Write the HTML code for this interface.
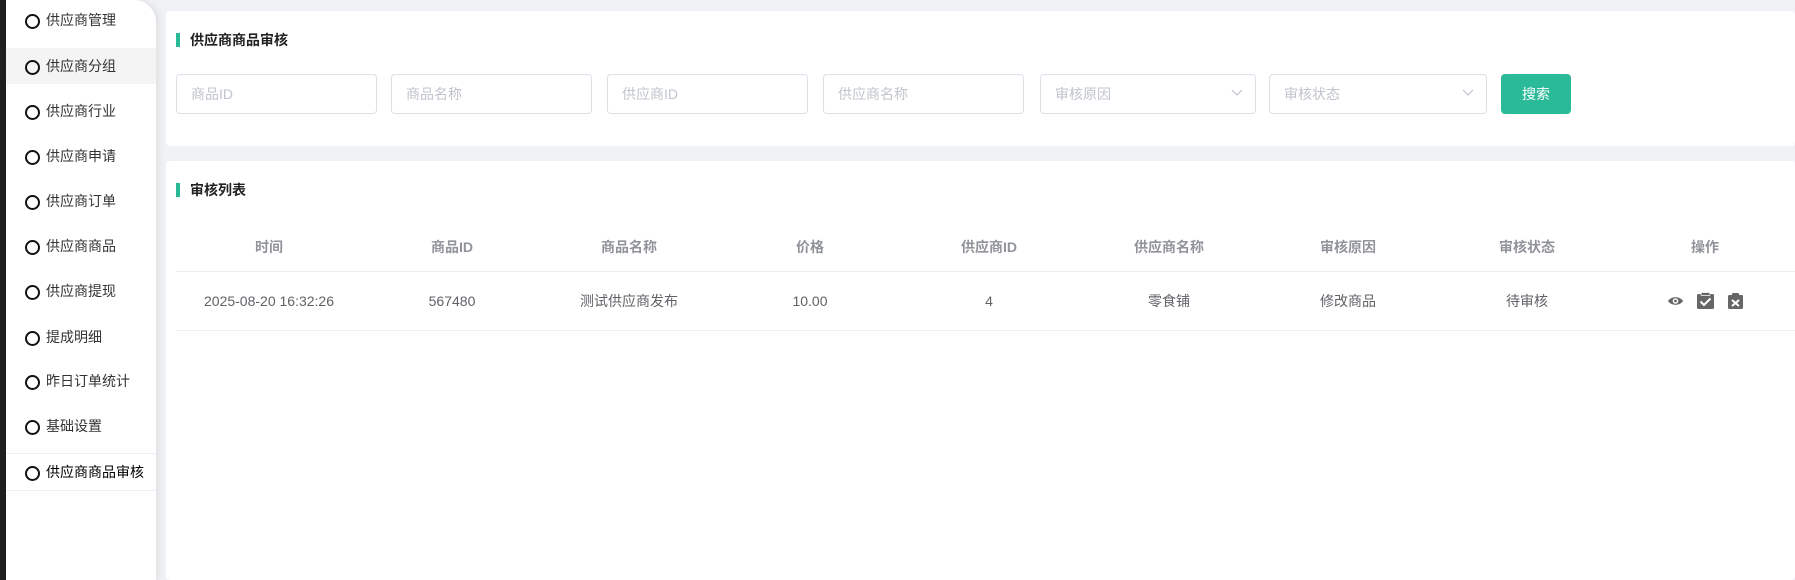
<!DOCTYPE html>
<html><head><meta charset="utf-8"><style>
*{margin:0;padding:0;box-sizing:border-box}
body{width:1795px;height:580px;overflow:hidden;background:#f0f2f5;font-family:"Liberation Sans","Noto Sans CJK SC",sans-serif;position:relative}
.dark{position:absolute;left:0;top:0;width:6px;height:580px;background:#1f1f1f}
.side{position:absolute;left:6px;top:0;width:150px;height:580px;background:#fff;border-top-right-radius:22px;box-shadow:3px 0 8px rgba(0,0,0,0.08)}
.it{position:absolute;left:0;width:150px;height:36px;line-height:36px;font-size:14px;color:#333;padding-left:40px}
.it:before{content:"";position:absolute;left:19px;top:12px;width:11px;height:11px;border:2px solid #111;border-radius:50%}
.card{position:absolute;left:166px;right:0;background:#fff;border-radius:4px}
.tt{position:absolute;left:10px;font-size:14px;font-weight:bold;color:#222;padding-left:14px;line-height:16px}
.tt:before{content:"";position:absolute;left:0;top:1px;width:4px;height:14px;background:#2bba98}
.in{position:absolute;top:74px;height:40px;border:1px solid #dcdfe6;border-radius:4px;font-size:14px;color:#c0c4cc;line-height:38px;padding-left:14px;background:#fff}
.in svg{position:absolute;right:12px;top:14px}
.btn{position:absolute;left:1501px;top:74px;width:70px;height:40px;background:#2bba98;color:#fff;border-radius:4px;font-size:14px;text-align:center;line-height:40px}
.c{position:absolute;width:170px;margin-left:-85px;text-align:center;font-size:14px;height:20px;line-height:20px;overflow:hidden}
.h{top:237px;font-weight:bold;color:#909399}
.d{top:291px;color:#606266}
.ln{position:absolute;left:176px;right:0;height:1px;background:#ebeef5}
</style></head><body>
<div class="dark"></div>
<div class="side">
<div class="it" style="top:2px">供应商管理</div>
<div class="it" style="top:48px;background:#f4f4f4">供应商分组</div>
<div class="it" style="top:93px">供应商行业</div>
<div class="it" style="top:138px">供应商申请</div>
<div class="it" style="top:183px">供应商订单</div>
<div class="it" style="top:228px">供应商商品</div>
<div class="it" style="top:273px">供应商提现</div>
<div class="it" style="top:319px">提成明细</div>
<div class="it" style="top:363px">昨日订单统计</div>
<div class="it" style="top:408px">基础设置</div>
<div style="position:absolute;left:0;top:453px;width:150px;height:1px;background:#ebeef5"></div>
<div class="it" style="top:454px;color:#000">供应商商品审核</div>
<div style="position:absolute;left:0;top:490px;width:150px;height:1px;background:#ebeef5"></div>
</div>
<div class="card" style="top:11px;height:135px"><div class="tt" style="top:21px">供应商商品审核</div></div>
<div class="card" style="top:161px;height:419px"><div class="tt" style="top:21px">审核列表</div></div>
<div class="in" style="left:176px;width:201px">商品ID</div>
<div class="in" style="left:391px;width:201px">商品名称</div>
<div class="in" style="left:607px;width:201px">供应商ID</div>
<div class="in" style="left:823px;width:201px">供应商名称</div>
<div class="in" style="left:1040px;width:216px">审核原因<svg width="12" height="8" viewBox="0 0 12 8"><path d="M1 1l5 5 5-5" fill="none" stroke="#c0c4cc" stroke-width="1.2"/></svg></div>
<div class="in" style="left:1269px;width:218px">审核状态<svg width="12" height="8" viewBox="0 0 12 8"><path d="M1 1l5 5 5-5" fill="none" stroke="#c0c4cc" stroke-width="1.2"/></svg></div>
<div class="btn">搜索</div>
<div class="c h" style="left:269px">时间</div>
<div class="c h" style="left:452px">商品ID</div>
<div class="c h" style="left:629px">商品名称</div>
<div class="c h" style="left:810px">价格</div>
<div class="c h" style="left:989px">供应商ID</div>
<div class="c h" style="left:1169px">供应商名称</div>
<div class="c h" style="left:1348px">审核原因</div>
<div class="c h" style="left:1527px">审核状态</div>
<div class="c h" style="left:1705px">操作</div>
<div class="ln" style="top:271px"></div>
<div class="c d" style="left:269px">2025-08-20 16:32:26</div>
<div class="c d" style="left:452px">567480</div>
<div class="c d" style="left:629px">测试供应商发布</div>
<div class="c d" style="left:810px">10.00</div>
<div class="c d" style="left:989px">4</div>
<div class="c d" style="left:1169px">零食铺</div>
<div class="c d" style="left:1348px">修改商品</div>
<div class="c d" style="left:1527px">待审核</div>
<svg style="position:absolute;left:1667px;top:292px" width="78" height="18" viewBox="0 0 78 18">
<path d="M1 9C4 4 13 4 16 9C13 14 4 14 1 9Z" fill="#666"/><circle cx="8.5" cy="9" r="2.8" fill="#fff"/><circle cx="8.5" cy="9" r="1.4" fill="#666"/>
<rect x="30" y="2" width="17" height="15" rx="1.5" fill="#666"/><rect x="34" y="0.5" width="9" height="3" rx="1" fill="#666" stroke="#fff" stroke-width="0.8"/><path d="M33.5 9.5l3.5 3.5 6.5-6.5" fill="none" stroke="#fff" stroke-width="2"/>
<rect x="61" y="3" width="15" height="14" rx="1.5" fill="#666"/><rect x="65" y="1" width="7" height="3" rx="1" fill="#666"/><path d="M65 8l7 6M72 8l-7 6" stroke="#fff" stroke-width="2"/>
</svg>
<div class="ln" style="top:330px"></div>
</body></html>
